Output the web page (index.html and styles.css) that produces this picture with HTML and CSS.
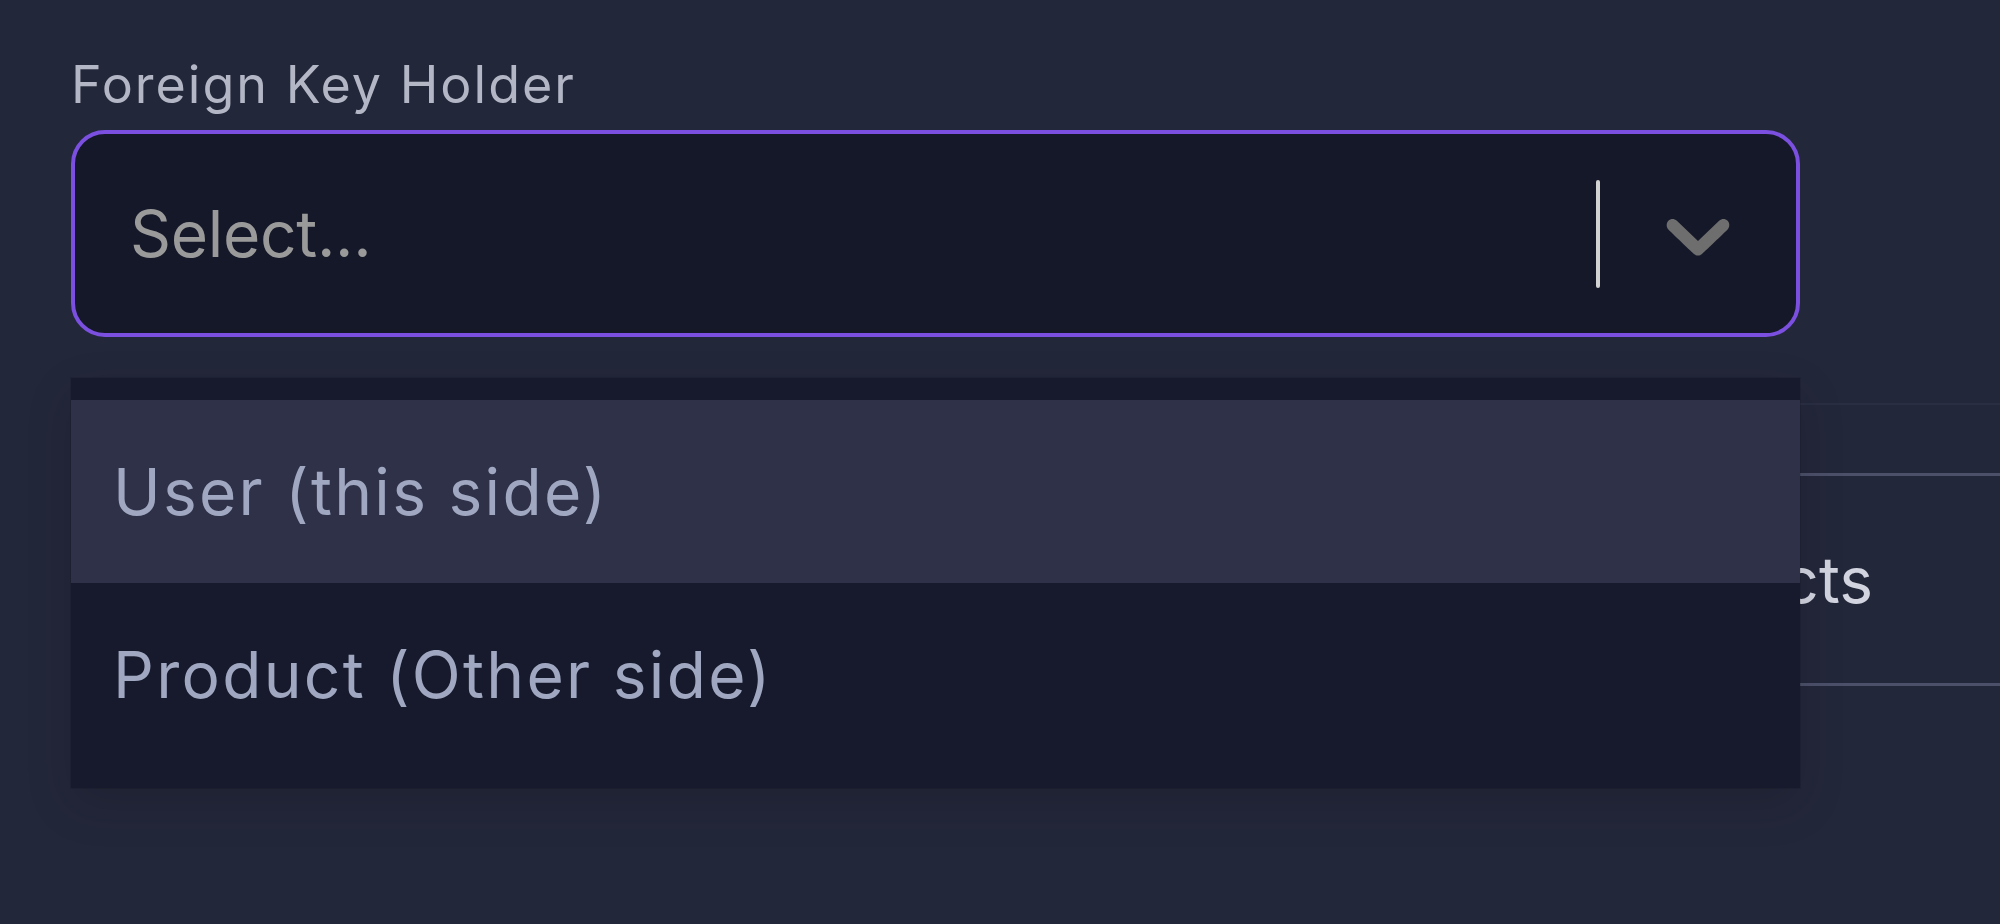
FILE: index.html
```html
<!DOCTYPE html>
<html lang="en">
<head>
<meta charset="utf-8">
<title>Foreign Key Holder</title>
<link rel="stylesheet" href="styles.css">
</head>
<body>
<div class="page">
  <div class="field">
    <label class="field-label">Foreign Key Holder</label>
    <div class="select is-focused">
      <div class="select-value">Select...</div>
      <div class="select-indicators">
        <span class="select-sep"></span>
        <div class="select-chevron">
          <svg viewBox="0 0 20 20" aria-hidden="true"><path d="M4.516 7.548c0.436-0.446 1.043-0.481 1.576 0l3.908 3.747 3.908-3.747c0.533-0.481 1.141-0.446 1.574 0 0.436 0.445 0.408 1.197 0 1.615-0.406 0.418-4.695 4.502-4.695 4.502-0.217 0.223-0.502 0.335-0.787 0.335s-0.57-0.112-0.789-0.335c0 0-4.287-4.084-4.695-4.502s-0.436-1.17 0-1.615z"></path></svg>
        </div>
      </div>
    </div>
    <div class="select-menu">
      <div class="option is-active">User (this side)</div>
      <div class="option">Product (Other side)</div>
    </div>
  </div>
  <div class="content">
    <div class="row row-top"></div>
    <div class="row row-main"><span class="cell-text">Products</span></div>
  </div>
</div>
</body>
</html>
```
FILE: styles.css
```css
* { box-sizing: border-box; }
html, body {
  margin: 0;
  padding: 0;
  background: #23273a;
  height: 100%;
  overflow: hidden;
}
body {
  font-family: Inter, "Noto Sans", sans-serif;
}
.page {
  padding: 53px 0 0 71px;
}
.field {
  position: relative;
  width: 1729px;
  z-index: 2;
}
.field-label {
  display: block;
  font-size: 52px;
  line-height: 63px;
  color: #b2b6c5;
  letter-spacing: 2px;
}
.select {
  margin-top: 14px;
  height: 207px;
  border: 4px solid #7b50e0;
  border-radius: 34px;
  background: #151829;
  display: flex;
  align-items: center;
}
.select-value {
  flex: 1;
  padding-left: 55px;
  font-size: 64px;
  letter-spacing: -0.3px;
  color: #9a9a9a;
}
.select-indicators {
  display: flex;
  align-items: center;
  align-self: stretch;
}
.select-sep {
  width: 4px;
  height: 108px;
  margin-left: 1px;
  border-radius: 2px;
  background: #d2d2d2;
}
.select-chevron {
  width: 196px;
  display: flex;
  align-items: center;
  justify-content: center;
}
.select-chevron svg {
  width: 108px;
  height: 108px;
  fill: #6e6e6e;
  display: block;
}
.select-menu {
  position: absolute;
  top: 100%;
  left: 0;
  right: 0;
  margin-top: 41px;
  padding: 22px 0;
  background: #161a2c;
  box-shadow: 0 0 0 1px rgba(0, 0, 0, 0.1), 0 16px 44px rgba(0, 0, 0, 0.14);
}
.option {
  height: 183px;
  display: flex;
  align-items: center;
  padding-left: 42px;
  font-size: 64px;
  letter-spacing: 2.3px;
  color: #a0a7c0;
}
.option.is-active {
  background: #2e3147;
}
.content {
  margin-top: 66px;
}
.row-top {
  height: 73px;
  border-top: 2px solid #2a2e43;
  border-bottom: 3px solid #4c5069;
}
.row-main {
  height: 210px;
  border-bottom: 3px solid #4c5069;
  display: flex;
  align-items: center;
  justify-content: flex-end;
  padding-right: 127px;
}
.cell-text {
  font-size: 64px;
  color: #d2d5e0;
}
```
